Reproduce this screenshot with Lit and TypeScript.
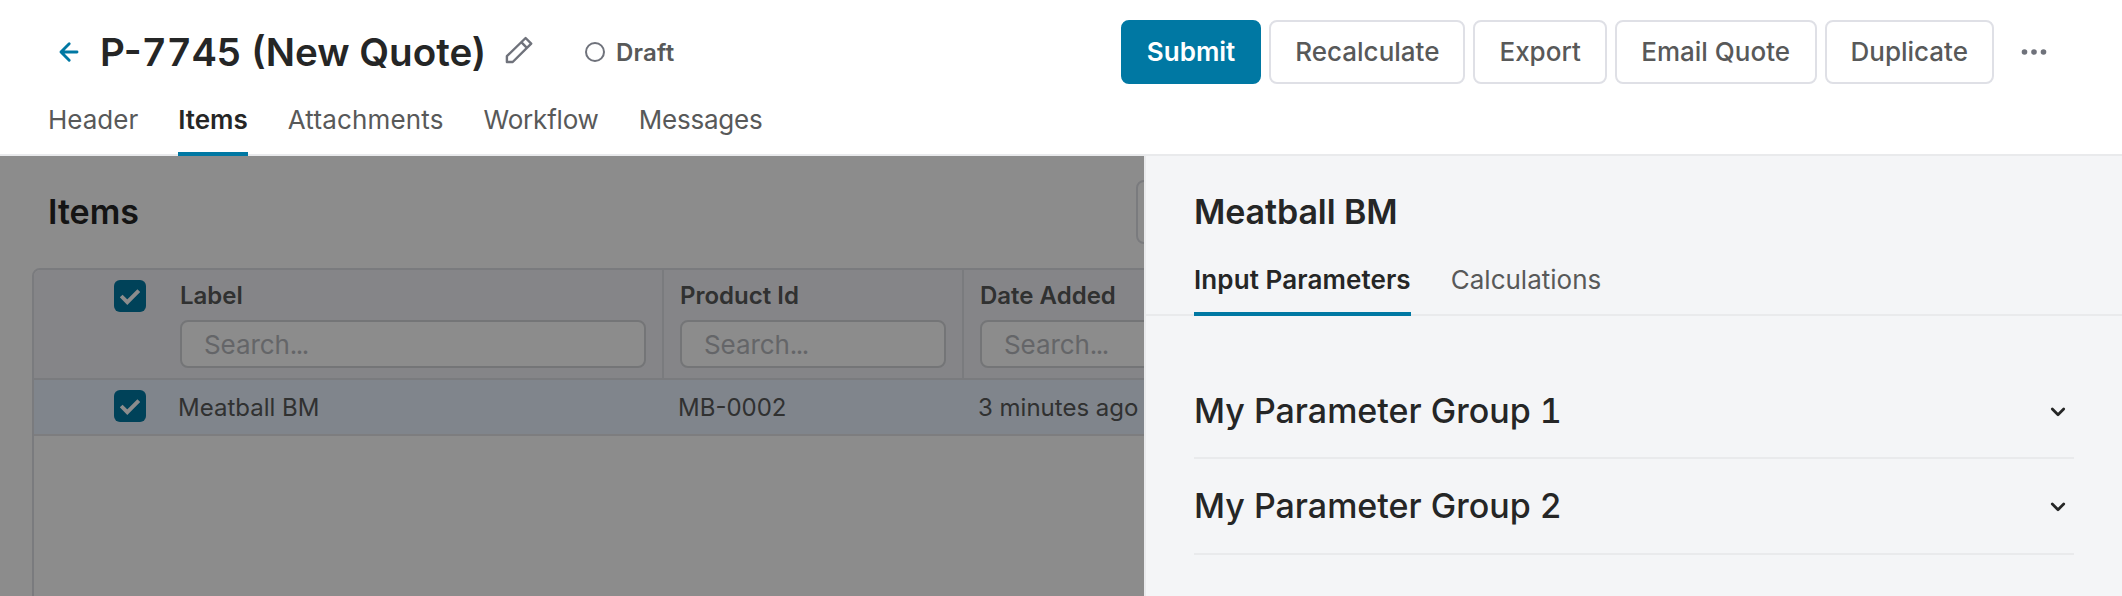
import { LitElement, html, css, svg } from "lit";
import { customElement } from "lit/decorators.js";

const check = () => svg`<svg width="32" height="32" viewBox="0 0 32 32"><path d="M7.200 16 13.300 22.200 24.800 10.600" fill="none" stroke="#fff" stroke-width="3.900"/></svg>`;
const chevron = () => svg`<svg class="chev" width="16" height="10" viewBox="0 0 16 10"><path d="M2.300 2.100 8 7.700 13.700 2.100" fill="none" stroke="#252626" stroke-width="2.800" stroke-linecap="round" stroke-linejoin="round"/></svg>`;

@customElement("app-root")
class AppRoot extends LitElement {
  static styles = css`
    :host { display: flex; flex-direction: column; height: 596px; overflow: hidden; background: #fff; font-family: Inter, "Liberation Sans", sans-serif; color: #252626; }
    * { box-sizing: border-box; }
    svg { display: block; flex: none; }
    .top { height: 156px; flex: none; border-bottom: 2px solid #e9eaec; }
    .bar { display: flex; align-items: center; height: 104px; padding: 0 75px 0 58px; }
    .title { font-size: 38.6px; font-weight: 600; line-height: 48px; margin: 0 0 0 20px; width: 385px; flex: none; white-space: nowrap; }
    .num { font-variant-numeric: tabular-nums; }
    .pencil { margin: 0 0 4px 20px; }
    .dot { width: 20px; height: 20px; border: 2px solid #6f727b; border-radius: 50%; margin-left: 52px; }
    .state { font-size: 24px; font-weight: 600; color: #585959; margin-left: 11px; letter-spacing: 0.2px; }
    .actions { display: flex; align-items: center; gap: 8px; margin-left: auto; }
    .btn { height: 64px; display: flex; align-items: center; padding: 0 24px 2px; border: 2px solid #dfe0e6; border-radius: 8px; font-size: 26px; font-weight: 500; color: #585959; white-space: nowrap; }
    .btn:nth-child(4) { padding: 0 24.5px 2px; }
    .primary { background: #0078a3; border-color: #0078a3; color: #fff; font-weight: 600; }
    .more { margin-left: 19px; }
    .tabs { display: flex; gap: 40px; padding-left: 48px; font-size: 26px; color: #585959; }
    .tab { height: 52px; line-height: 31px; white-space: nowrap; border-bottom: 4px solid transparent; }
    .on { color: #252626; font-weight: 600; border-color: #0078a3; }
    .wide { letter-spacing: 0.16px; }
    .tight { letter-spacing: -0.2px; }
    .main { flex: 1; min-height: 0; display: grid; grid-template-columns: 1144px 1fr; }
    .items { position: relative; overflow: hidden; background: #fff; }
    .shade { position: absolute; inset: 0; background: rgba(0, 0, 0, 0.45); }
    .head { display: flex; height: 112px; align-items: center; padding: 0 0 0 48px; width: 1500px; }
    h2 { margin: 0; font-size: 34px; font-weight: 600; line-height: 42px; }
    .head h2 { width: 91px; }
    .ghost { margin-left: 997px; width: 200px; height: 64px; border: 2px solid #dfe0e6; border-radius: 8px; flex: none; }
    .grid { margin-left: 32px; width: 1400px; height: 600px; border: 2px solid #dfe0e6; border-radius: 8px; overflow: hidden; }
    .row { display: grid; grid-template-columns: 130px 500px 300px 1fr; }
    .hrow { height: 110px; background: #f3f3f7; border-bottom: 2px solid #dfe0e6; }
    .col { padding: 10px 16px 0; border-right: 2px solid #dfe0e6; font-size: 24px; font-weight: 600; color: #585959; line-height: 31px; }
    .box { width: 32px; height: 32px; margin: 10px 0 0 80px; border-radius: 6px; background: #0078a3; }
    .field { margin-top: 9px; height: 48px; border: 2px solid #d3d5d9; border-radius: 8px; background: #fff; padding: 0 22px; line-height: 45px; font-size: 26px; font-weight: 400; color: #b7b9bd; letter-spacing: -0.1px; }
    .dots { letter-spacing: -1.4px; }
    .drow { height: 56px; background: #e9f2ff; border-bottom: 2px solid #e3e4e8; font-size: 24px; line-height: 55px; color: #585959; }
    .cell { padding-left: 14px; }
    .panel { background: #f4f5f7; border-left: 2px solid #e9eaec; }
    .ptitle { padding: 35px 48px 0; height: 108px; }
    .ptitle h2 { letter-spacing: -0.1px; }
    .ptabs { height: 52px; border-bottom: 2px solid #e9eaec; }
    .ptabs .on { letter-spacing: 0.1px; }
    .groups { padding: 48px 48px 0; }
    .group { display: flex; justify-content: space-between; align-items: center; height: 95px; border-bottom: 2px solid #e9eaec; padding-right: 8px; font-size: 34px; font-weight: 500; }
    .group + .group { height: 96px; padding-bottom: 1px; }
    .chev { margin-top: 3px; }
  `;

  render() {
    return html`
      <header class="top">
        <div class="bar">
          <svg width="22" height="22" viewBox="0 0 22 22"><path d="M19 11H3M11.200 2.800 3 11 11.200 19.200" fill="none" stroke="#0078a3" stroke-width="2.900" stroke-linecap="round" stroke-linejoin="round"/></svg>
          <h1 class="title">P-<span class="num">7745</span> (New Quote)</h1>
          <svg class="pencil" width="28" height="28" viewBox="0 0 28 28"><path d="M1.900 26V20.200L20.600 2l5.600 5.600L7.700 26zM16.300 6.200l5.600 5.600" fill="none" stroke="#6f727b" stroke-width="2.400" stroke-linejoin="round"/></svg>
          <span class="dot"></span><span class="state">Draft</span>
          <div class="actions">
            <div class="btn primary">Submit</div>
            ${["Recalculate", "Export", "Email Quote", "Duplicate"].map((t) => html`<div class="btn">${t}</div>`)}
            <svg class="more" width="26" height="8" viewBox="0 0 26 8"><g fill="#6f727b"><circle cx="3.500" cy="4" r="2.800"/><circle cx="13" cy="4" r="2.800"/><circle cx="22.500" cy="4" r="2.800"/></g></svg>
          </div>
        </div>
        <nav class="tabs">
          <span class="tab">Header</span><span class="tab on">Items</span><span class="tab wide">Attachments</span><span class="tab tight">Workflow</span><span class="tab tight">Messages</span>
        </nav>
      </header>
      <div class="main">
        <section class="items">
          <div class="head"><h2>Items</h2><div class="ghost"></div></div>
          <div class="grid">
            <div class="row hrow">
              <div class="box">${check()}</div>
              ${["Label", "Product Id", "Date Added"].map((t) => html`<div class="col">${t}<div class="field">Search<span class="dots">...</span></div></div>`)}
            </div>
            <div class="row drow">
              <div class="box">${check()}</div>
              <div class="cell">Meatball BM</div><div class="cell">MB-0002</div><div class="cell">3 minutes ago</div>
            </div>
          </div>
          <div class="shade"></div>
        </section>
        <aside class="panel">
          <div class="ptitle"><h2>Meatball BM</h2></div>
          <nav class="tabs ptabs"><span class="tab on">Input Parameters</span><span class="tab">Calculations</span></nav>
          <div class="groups">
            ${[1, 2].map((n) => html`<div class="group"><span>My Parameter Group <span class="num">${n}</span></span>${chevron()}</div>`)}
          </div>
        </aside>
      </div>
    `;
  }
}
